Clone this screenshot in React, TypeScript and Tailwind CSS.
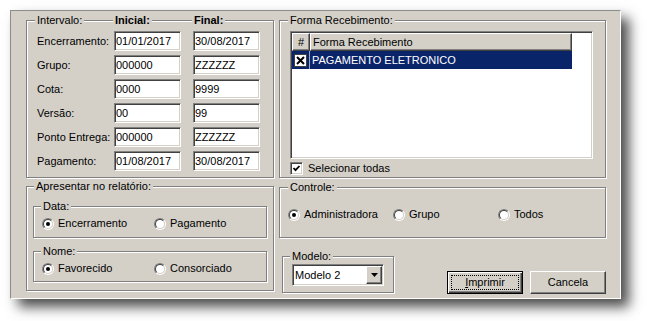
import React from 'react';

const sunken =
  'border border-t-[#808080] border-l-[#808080] border-r-white border-b-white shadow-[inset_1px_1px_0_#404040,inset_-1px_-1px_0_#d4d0c8]';
const raised =
  'border border-t-white border-l-white border-r-[#404040] border-b-[#404040] shadow-[inset_-1px_-1px_0_#808080]';
const etched = 'relative border border-[#808080] shadow-[1px_1px_0_#ffffff,inset_1px_1px_0_#ffffff]';

function Caption({ children, className = '' }: { children: React.ReactNode; className?: string }) {
  return (
    <span className={`absolute top-[-7px] px-[2px] leading-[13px] bg-[#d4d0c8] whitespace-nowrap ${className}`}>
      {children}
    </span>
  );
}

function Field({ value }: { value: string }) {
  return (
    <div className={`w-[67px] h-[20px] bg-white ${sunken} flex items-center pl-[1px] leading-none`}>{value}</div>
  );
}

function Radio({ checked = false }: { checked?: boolean }) {
  return (
    <span className="w-[12px] h-[12px] shrink-0 rounded-full border border-t-[#808080] border-l-[#808080] border-r-white border-b-white flex">
      <span className="flex-1 rounded-full border border-t-[#404040] border-l-[#404040] border-r-[#d4d0c8] border-b-[#d4d0c8] bg-white flex items-center justify-center">
        {checked && <span className="w-[4px] h-[4px] rounded-full bg-black" />}
      </span>
    </span>
  );
}

function RadioItem({ label, checked, className = '' }: { label: string; checked?: boolean; className?: string }) {
  return (
    <div className={`flex items-center gap-[4px] leading-[13px] ${className}`}>
      <Radio checked={checked} />
      <span>{label}</span>
    </div>
  );
}

function CheckBox() {
  return (
    <span className={`w-[13px] h-[13px] bg-white ${sunken} flex items-center justify-center`}>
      <svg width="9" height="9" viewBox="0 0 9 9">
        <polyline points="1.5,4 3.5,6.2 7.5,2" fill="none" stroke="#000" strokeWidth="1.8" />
      </svg>
    </span>
  );
}

function XBox() {
  return (
    <span className="w-[13px] h-[13px] bg-white border border-[#404040] flex items-center justify-center">
      <svg width="9" height="9" viewBox="0 0 9 9">
        <path d="M1 1 L8 8 M8 1 L1 8" stroke="#000" strokeWidth="2" />
      </svg>
    </span>
  );
}

const rows: [string, string, string][] = [
  ['Encerramento:', '01/01/2017', '30/08/2017'],
  ['Grupo:', '000000', 'ZZZZZZ'],
  ['Cota:', '0000', '9999'],
  ['Versão:', '00', '99'],
  ['Ponto Entrega:', '000000', 'ZZZZZZ'],
  ['Pagamento:', '01/08/2017', '30/08/2017'],
];

export default function App() {
  return (
    <div className="w-[647px] h-[321px] bg-white overflow-hidden pt-[10px] pl-[10px] text-[11px] text-black font-['Liberation_Sans',Arial,sans-serif]">
      <div className="w-[611px] h-[289px] bg-[#d4d0c8] border border-t-[#8c8c8c] border-l-[#8c8c8c] border-r-white border-b-white shadow-[8px_8px_12px_rgba(0,0,0,0.7)] pt-[9px] pl-[15px]">
        {/* linha de cima */}
        <div className="flex">
          <div className={`${etched} w-[248px] h-[158px] pt-[10px] pl-[10px]`}>
            <Caption className="left-[8px]">Intervalo:</Caption>
            <Caption className="left-[86px] font-bold">Inicial:</Caption>
            <Caption className="left-[165px] font-bold">Final:</Caption>
            <div className="flex flex-col gap-[4px]">
              {rows.map(([label, ini, fim]) => (
                <div key={label} className="flex items-center h-[20px]">
                  <span className="w-[77px] leading-[13px]">{label}</span>
                  <Field value={ini} />
                  <div className="ml-[12px]">
                    <Field value={fim} />
                  </div>
                </div>
              ))}
            </div>
          </div>

          <div className={`${etched} ml-[5px] w-[327px] h-[158px] pt-[10px] pl-[10px]`}>
            <Caption className="left-[8px]">Forma Recebimento:</Caption>
            <div className={`w-[303px] h-[128px] bg-white ${sunken} p-[1px]`}>
              <div className="flex h-[18px]">
                <div className={`w-[18px] bg-[#d4d0c8] ${raised} flex items-center justify-center leading-none`}>#</div>
                <div className={`w-[262px] bg-[#d4d0c8] ${raised} flex items-center pl-[2px] leading-none`}>Forma Recebimento</div>
              </div>
              <div className="flex h-[18px] w-[280px] bg-[#0a246a] text-white">
                <div className="w-[18px] border-r border-[#9aa4c8] flex items-center justify-center">
                  <XBox />
                </div>
                <div className="flex items-center pl-[2px] leading-none">PAGAMENTO ELETRONICO</div>
              </div>
            </div>
            <div className="mt-[3px] flex items-center gap-[5px] leading-[13px]">
              <CheckBox />
              <span>Selecionar todas</span>
            </div>
          </div>
        </div>

        {/* linha de baixo */}
        <div className="flex items-start mt-[8px]">
          <div className={`${etched} w-[248px] h-[105px] pt-[19px] pl-[6px]`}>
            <Caption className="left-[7px]">Apresentar no relatório:</Caption>
            <div className={`${etched} w-[234px] h-[32px] pt-[10px] pl-[8px] flex items-start`}>
              <Caption className="left-[7px]">Data:</Caption>
              <RadioItem label="Encerramento" checked className="w-[112px]" />
              <RadioItem label="Pagamento" />
            </div>
            <div className={`${etched} mt-[13px] w-[234px] h-[31px] pt-[10px] pl-[8px] flex items-start`}>
              <Caption className="left-[7px]">Nome:</Caption>
              <RadioItem label="Favorecido" checked className="w-[112px]" />
              <RadioItem label="Consorciado" />
            </div>
          </div>

          <div className="ml-[5px] mt-[1px]">
            <div className={`${etched} w-[327px] h-[51px] pt-[20px] pl-[8px] flex items-start`}>
              <Caption className="left-[8px]">Controle:</Caption>
              <RadioItem label="Administradora" checked className="w-[105px]" />
              <RadioItem label="Grupo" className="w-[105px]" />
              <RadioItem label="Todos" />
            </div>

            <div className="flex items-start">
              <div className={`${etched} ml-[3px] mt-[18px] w-[112px] h-[37px] pt-[7px] pl-[9px]`}>
                <Caption className="left-[7px]">Modelo:</Caption>
                <div className={`w-[92px] h-[22px] bg-white ${sunken} p-[1px] flex`}>
                  <span className="flex-1 flex items-center pl-[1px] leading-none">Modelo 2</span>
                  <span className={`w-[16px] h-[18px] bg-[#d4d0c8] ${raised} flex items-center justify-center`}>
                    <svg width="7" height="4" viewBox="0 0 7 4">
                      <path d="M0 0 H7 L3.5 4 Z" fill="#000" />
                    </svg>
                  </span>
                </div>
              </div>

              <div className="mt-[33px] ml-[53px] flex gap-[7px]">
                <button className="w-[76px] h-[23px] border border-black bg-[#d4d0c8] shadow-[inset_1px_1px_0_#ffffff,inset_-1px_-1px_0_#404040,inset_-2px_-2px_0_#808080] p-[3px] flex">
                  <span className="flex-1 border border-dotted border-black flex items-center justify-center leading-none">
                    <span className="underline">I</span>mprimir
                  </span>
                </button>
                <button className={`w-[76px] h-[23px] bg-[#d4d0c8] ${raised} flex items-center justify-center leading-none`}>
                  Cancela
                </button>
              </div>
            </div>
          </div>
        </div>
      </div>
    </div>
  );
}
